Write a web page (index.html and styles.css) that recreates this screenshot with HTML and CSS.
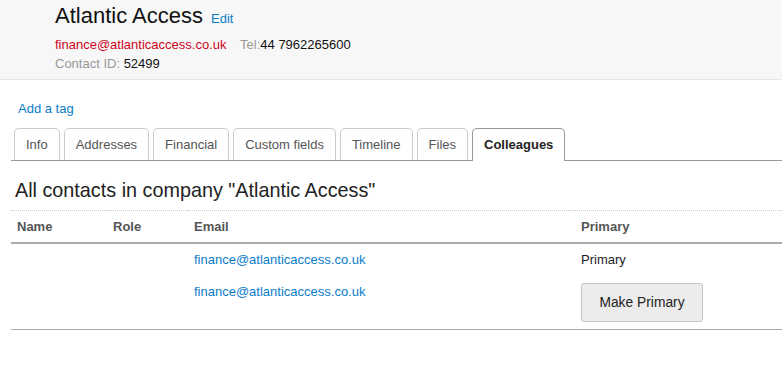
FILE: index.html
```html
<!DOCTYPE html>
<html lang="en">
<head>
    <meta charset="UTF-8">
    <title>Atlantic Access - Colleagues</title>
    <link rel="stylesheet" href="styles.css">
</head>
<body>
    <div class="contact-header">
        <h1>Atlantic Access <a href="#" class="edit-link">Edit</a></h1>
        <div class="contact-line">
            <a href="#" class="contact-email">finance@atlanticaccess.co.uk</a>
            <span class="muted tel">Tel:</span>44 7962265600
        </div>
        <div class="contact-line">
            <span class="muted">Contact ID:</span> 52499
        </div>
    </div>

    <div class="page-body">
        <a href="#" class="tag-link">Add a tag</a>

        <ul class="tabs">
            <li class="tab">Info</li>
            <li class="tab">Addresses</li>
            <li class="tab">Financial</li>
            <li class="tab">Custom fields</li>
            <li class="tab">Timeline</li>
            <li class="tab">Files</li>
            <li class="tab active">Colleagues</li>
        </ul>

        <h2 class="section-title">All contacts in company "Atlantic Access"</h2>

        <table class="colleagues">
            <thead>
                <tr>
                    <th class="col-name">Name</th>
                    <th class="col-role">Role</th>
                    <th class="col-email">Email</th>
                    <th>Primary</th>
                </tr>
            </thead>
            <tbody>
                <tr>
                    <td></td>
                    <td></td>
                    <td><a href="#">finance@atlanticaccess.co.uk</a></td>
                    <td>Primary</td>
                </tr>
                <tr class="with-button">
                    <td></td>
                    <td></td>
                    <td><a href="#">finance@atlanticaccess.co.uk</a></td>
                    <td><button class="btn">Make Primary</button></td>
                </tr>
            </tbody>
        </table>
    </div>
</body>
</html>
```

FILE: styles.css
```css
:root {
    --link: #0a7cc9;
    --red: #d0021b;
    --muted: #999;
    --text: #222;
}

* {
    margin: 0;
    padding: 0;
    box-sizing: border-box;
}

body {
    font-family: "Liberation Sans", Arial, sans-serif;
    font-size: 13px;
    color: var(--text);
    background: #fff;
}

a {
    color: var(--link);
    text-decoration: none;
}

.contact-header {
    height: 80px;
    background: #f7f7f7;
    border-bottom: 1px solid #e6e6e6;
    padding: 2px 0 0 55px;
}

.contact-header h1 {
    font-size: 22px;
    font-weight: 400;
    color: #111;
    line-height: 28px;
}

.edit-link {
    font-size: 13px;
    margin-left: 2px;
}

.contact-line {
    line-height: 19px;
    color: #111;
}

.contact-header h1 + .contact-line {
    margin-top: 2px;
}

.contact-email {
    color: var(--red);
}

.muted {
    color: var(--muted);
}

.tel {
    margin-left: 10px;
}

.page-body {
    padding: 0 0 0 11px;
}

.tag-link {
    display: inline-block;
    margin: 21px 0 0 7px;
    line-height: 16px;
}

.tabs {
    list-style: none;
    display: flex;
    gap: 4px;
    margin-top: 11px;
    padding-left: 3px;
    border-bottom: 1px solid #999;
}

.tab {
    height: 32px;
    line-height: 32px;
    padding: 0 11px;
    border: 1px solid #ccc;
    border-bottom: none;
    border-radius: 5px 5px 0 0;
    color: #555;
}

.tab.active {
    font-weight: 700;
    color: #222;
    border-color: #999;
    background: #fff;
    margin-bottom: -1px;
    height: 33px;
}

.section-title {
    font-size: 19.8px;
    font-weight: 400;
    color: #222;
    margin: 17px 0 0 4px;
    line-height: 24px;
}

.colleagues {
    width: 100%;
    border-collapse: collapse;
    margin-top: 8px;
    border-top: 1px dotted #ccc;
    border-bottom: 1px solid #aaa;
}

.colleagues th {
    text-align: left;
    font-weight: 700;
    color: #555;
    height: 32px;
    padding: 0 6px;
    border-bottom: 2px solid #aaa;
}

.colleagues th.col-name {
    width: 96px;
}

.colleagues th.col-role {
    width: 81px;
}

.colleagues th.col-email {
    width: 387px;
}

.colleagues td {
    padding: 7px 6px 0;
    height: 34px;
    line-height: 18px;
    vertical-align: top;
    color: #222;
}

.colleagues tr.with-button td {
    padding-top: 6px;
    height: 53px;
}

.btn {
    display: block;
    font-family: inherit;
    font-size: 13.8px;
    color: #222;
    background: #ececec;
    border: 1px solid #c4c4c4;
    border-radius: 3px;
    width: 122px;
    height: 39px;
    cursor: pointer;
}
```
